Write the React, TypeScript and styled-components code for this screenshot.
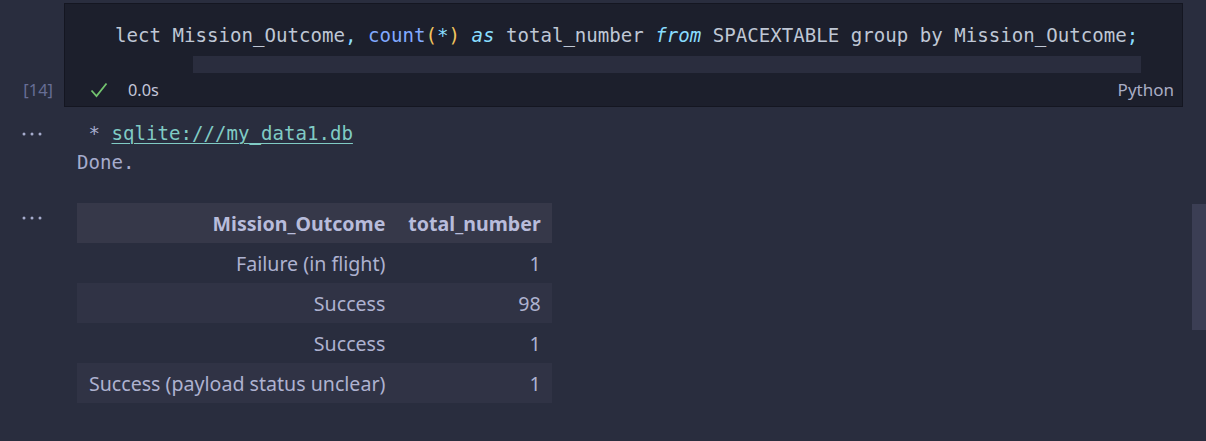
import React from "react";
import styled, { createGlobalStyle } from "styled-components";

const Global = createGlobalStyle`
  html, body { margin: 0; padding: 0; background: #292d3e; }
  body { width: 1206px; height: 441px; overflow: hidden; }
  #root { width: 1206px; height: 441px; }
`;

const Page = styled.div`
  position: relative;
  width: 1206px;
  height: 441px;
  background: #292d3e;
  padding-top: 3px;
  box-sizing: border-box;
  display: flex;
  flex-direction: column;
`;

const CellRow = styled.div`
  display: flex;
  align-items: stretch;
`;

const ExecGutter = styled.div`
  width: 64px;
  display: flex;
  align-items: flex-end;
  justify-content: flex-end;
  padding: 0 11px 6px 0;
  box-sizing: border-box;
  font-family: "Noto Sans", sans-serif;
  font-size: 16.5px;
  line-height: 22px;
  color: #676e95;
`;

const CellBox = styled.div`
  width: 1119px;
  height: 104px;
  box-sizing: border-box;
  border: 1px solid #141621;
  background: #1c1f2c;
  display: flex;
  flex-direction: column;
`;

const Editor = styled.div`
  padding: 17px 0 0 50px;
  font-family: "DejaVu Sans Mono", monospace;
  font-size: 19.1px;
  line-height: 29px;
  color: #bfc7d5;
  white-space: pre;
`;

const Tok = styled.span<{ $c: string; $i?: boolean }>`
  color: ${(p) => p.$c};
  font-style: ${(p) => (p.$i ? "italic" : "normal")};
`;

const HScroll = styled.div`
  margin: 6px 41px 0 128px;
  height: 17px;
  background: #2a2d3e;
`;

const StatusRow = styled.div`
  flex: 1;
  display: flex;
  align-items: center;
  padding: 0 8px 0 25px;
  font-family: "Noto Sans", sans-serif;
  font-size: 17px;
  color: #c3c7dc;
`;

const Duration = styled.span`
  margin-left: 20px;
  font-size: 16.3px;
  color: #c3c6d9;
`;

const Lang = styled.span`
  margin-left: auto;
  color: #a9adc4;
`;

const OutputRow = styled.div<{ $mt: number }>`
  display: flex;
  align-items: flex-start;
  margin-top: ${(p) => p.$mt}px;
`;

const DotsGutter = styled.div<{ $top: number }>`
  width: 77px;
  height: 29px;
  padding: ${(p) => p.$top}px 0 0 22px;
  box-sizing: border-box;
  display: flex;
  align-items: center;
`;

const TextOut = styled.div`
  font-family: "DejaVu Sans Mono", monospace;
  font-size: 19.1px;
  line-height: 29px;
  color: #a6accd;
  white-space: pre;
`;

const Link = styled.a`
  color: #80cbc4;
  text-decoration: underline;
  text-underline-offset: 3px;
  text-decoration-thickness: 1px;
`;

const Table = styled.table`
  border-collapse: collapse;
  border-spacing: 0;
  font-family: "Noto Sans", sans-serif;
  font-size: 19.6px;
  color: #aeb2d0;
`;

const Th = styled.th`
  height: 40px;
  padding: 0 11px 0 12px;
  text-align: right;
  font-weight: 700;
  color: #b8bcdb;
  background: #363849;
  white-space: nowrap;
`;

const Tr = styled.tr<{ $striped: boolean }>`
  background: ${(p) => (p.$striped ? "#303345" : "transparent")};
`;

const Td = styled.td`
  height: 40px;
  padding: 0 11px 0 12px;
  text-align: right;
  white-space: nowrap;
`;

const VScroll = styled.div`
  position: absolute;
  right: 0;
  top: 204px;
  width: 14px;
  height: 126px;
  background: #3b3e54;
`;

const Dots = () => (
  <svg width="20" height="4" viewBox="0 0 20 4">
    <circle cx="2" cy="2" r="1.5" fill="#a6accd" />
    <circle cx="10" cy="2" r="1.5" fill="#a6accd" />
    <circle cx="18" cy="2" r="1.5" fill="#a6accd" />
  </svg>
);

const Check = () => (
  <svg width="18" height="16" viewBox="0 0 18 16">
    <polyline points="1.5,8.5 6.5,14 16.5,1.5" fill="none" stroke="#73c46f" strokeWidth="1.8" />
  </svg>
);

const rows: [string, string][] = [
  ["Failure (in flight)", "1"],
  ["Success", "98"],
  ["Success", "1"],
  ["Success (payload status unclear)", "1"],
];

export default function App() {
  const P = "#89ddff";
  return (
    <>
      <Global />
      <Page>
        <CellRow>
          <ExecGutter>[14]</ExecGutter>
          <CellBox>
            <Editor>
              lect Mission_Outcome<Tok $c={P}>,</Tok> <Tok $c="#82aaff">count</Tok>
              <Tok $c="#f2c45e">(</Tok>
              <Tok $c={P}>*</Tok>
              <Tok $c="#f2c45e">)</Tok> <Tok $c={P} $i>as</Tok> total_number{" "}
              <Tok $c={P} $i>from</Tok> SPACEXTABLE group by Mission_Outcome<Tok $c={P}>;</Tok>
            </Editor>
            <HScroll />
            <StatusRow>
              <Check />
              <Duration>0.0s</Duration>
              <Lang>Python</Lang>
            </StatusRow>
          </CellBox>
        </CellRow>
        <OutputRow $mt={12}>
          <DotsGutter $top={0}>
            <Dots />
          </DotsGutter>
          <TextOut>
            {" * "}
            <Link href="#">sqlite:///my_data1.db</Link>
            {"\n"}Done.
          </TextOut>
        </OutputRow>
        <OutputRow $mt={26}>
          <DotsGutter $top={0}>
            <Dots />
          </DotsGutter>
          <Table>
            <thead>
              <tr>
                <Th>Mission_Outcome</Th>
                <Th>total_number</Th>
              </tr>
            </thead>
            <tbody>
              {rows.map(([a, b], i) => (
                <Tr key={i} $striped={i % 2 === 1}>
                  <Td>{a}</Td>
                  <Td>{b}</Td>
                </Tr>
              ))}
            </tbody>
          </Table>
        </OutputRow>
        <VScroll />
      </Page>
    </>
  );
}
